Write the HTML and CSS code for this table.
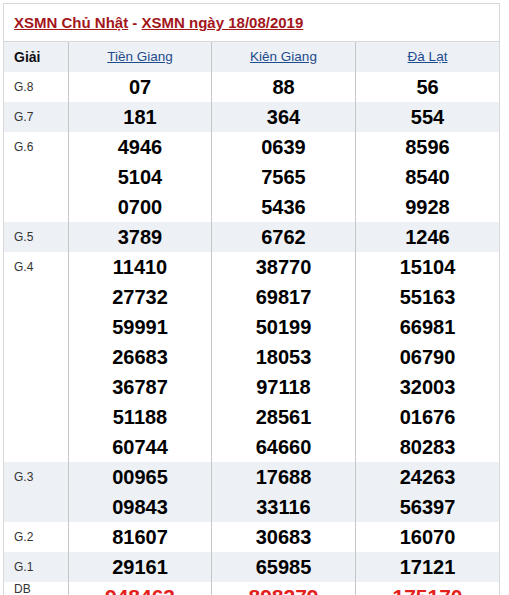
FILE: index.html
```html
<!DOCTYPE html>
<html lang="vi">
<head>
<meta charset="utf-8">
<title>XSMN 18/08/2019</title>
<link rel="stylesheet" href="styles.css">
</head>
<body>
<div class="box">
  <div class="title"><a href="#">XSMN Chủ Nhật</a> - <a href="#">XSMN ngày 18/08/2019</a></div>
  <table class="kq">
    <thead>
      <tr class="head">
        <th class="c-label">Giải</th>
        <th class="c-a"><a href="#">Tiền Giang</a></th>
        <th class="c-b"><a href="#">Kiên Giang</a></th>
        <th class="c-c"><a href="#">Đà Lạt</a></th>
      </tr>
    </thead>
    <tbody>
      <tr>
        <td class="lbl">G.8</td>
        <td><div class="n">07</div></td>
        <td><div class="n">88</div></td>
        <td><div class="n">56</div></td>
      </tr>
      <tr class="alt">
        <td class="lbl">G.7</td>
        <td><div class="n">181</div></td>
        <td><div class="n">364</div></td>
        <td><div class="n">554</div></td>
      </tr>
      <tr>
        <td class="lbl">G.6</td>
        <td><div class="n">4946</div><div class="n">5104</div><div class="n">0700</div></td>
        <td><div class="n">0639</div><div class="n">7565</div><div class="n">5436</div></td>
        <td><div class="n">8596</div><div class="n">8540</div><div class="n">9928</div></td>
      </tr>
      <tr class="alt">
        <td class="lbl">G.5</td>
        <td><div class="n">3789</div></td>
        <td><div class="n">6762</div></td>
        <td><div class="n">1246</div></td>
      </tr>
      <tr>
        <td class="lbl">G.4</td>
        <td><div class="n">11410</div><div class="n">27732</div><div class="n">59991</div><div class="n">26683</div><div class="n">36787</div><div class="n">51188</div><div class="n">60744</div></td>
        <td><div class="n">38770</div><div class="n">69817</div><div class="n">50199</div><div class="n">18053</div><div class="n">97118</div><div class="n">28561</div><div class="n">64660</div></td>
        <td><div class="n">15104</div><div class="n">55163</div><div class="n">66981</div><div class="n">06790</div><div class="n">32003</div><div class="n">01676</div><div class="n">80283</div></td>
      </tr>
      <tr class="alt">
        <td class="lbl">G.3</td>
        <td><div class="n">00965</div><div class="n">09843</div></td>
        <td><div class="n">17688</div><div class="n">33116</div></td>
        <td><div class="n">24263</div><div class="n">56397</div></td>
      </tr>
      <tr>
        <td class="lbl">G.2</td>
        <td><div class="n">81607</div></td>
        <td><div class="n">30683</div></td>
        <td><div class="n">16070</div></td>
      </tr>
      <tr class="alt">
        <td class="lbl">G.1</td>
        <td><div class="n">29161</div></td>
        <td><div class="n">65985</div></td>
        <td><div class="n">17121</div></td>
      </tr>
      <tr>
        <td class="lbl lbl-db">DB</td>
        <td><div class="n db">948463</div></td>
        <td><div class="n db">898279</div></td>
        <td><div class="n db">175170</div></td>
      </tr>
    </tbody>
  </table>
</div>
</body>
</html>
```

FILE: styles.css
```css
html, body {
  margin: 0;
  background: #fff;
}
body {
  padding: 3px;
  font-family: "Liberation Sans", Arial, sans-serif;
  color: #000;
}
.box {
  width: 495px;
  border: 1px solid #d8d8d8;
  border-bottom: none;
}
.title {
  height: 37px;
  line-height: 37px;
  padding-left: 10px;
  font-size: 15px;
  font-weight: bold;
  color: #a3161c;
  border-bottom: 1px solid #d8d8d8;
  white-space: nowrap;
}
.title a {
  color: #a3161c;
  text-decoration: underline;
}
.kq {
  width: 495px;
  border-collapse: separate;
  border-spacing: 0;
  table-layout: fixed;
}
.kq th, .kq td {
  box-sizing: border-box;
  padding: 0;
  vertical-align: top;
  text-align: center;
}
.kq th + th, .kq td + td {
  border-left: 1px solid #c6c6c6;
}
.c-label { width: 64px; }
.c-a { width: 143px; }
.c-b { width: 144px; }
.c-c { width: 144px; }
.head {
  background: #edf0f5;
}
.head th {
  height: 30px;
  line-height: 30px;
  font-size: 13.5px;
  font-weight: normal;
}
.head th.c-label {
  text-align: left;
  padding-left: 10px;
  font-size: 14px;
  font-weight: bold;
  color: #111;
}
.head a {
  color: #1d4c8c;
  text-decoration: underline;
}
.alt {
  background: #edf0f5;
}
.lbl {
  text-align: left !important;
  padding-left: 10px !important;
  font-size: 12px;
  line-height: 30px;
  color: #333;
}
.lbl-db {
  line-height: 14px;
}
.n {
  height: 30px;
  line-height: 30px;
  font-size: 20px;
  font-weight: bold;
  color: #000;
}
.n.db {
  font-size: 21px;
  color: #e3201b;
}
```
